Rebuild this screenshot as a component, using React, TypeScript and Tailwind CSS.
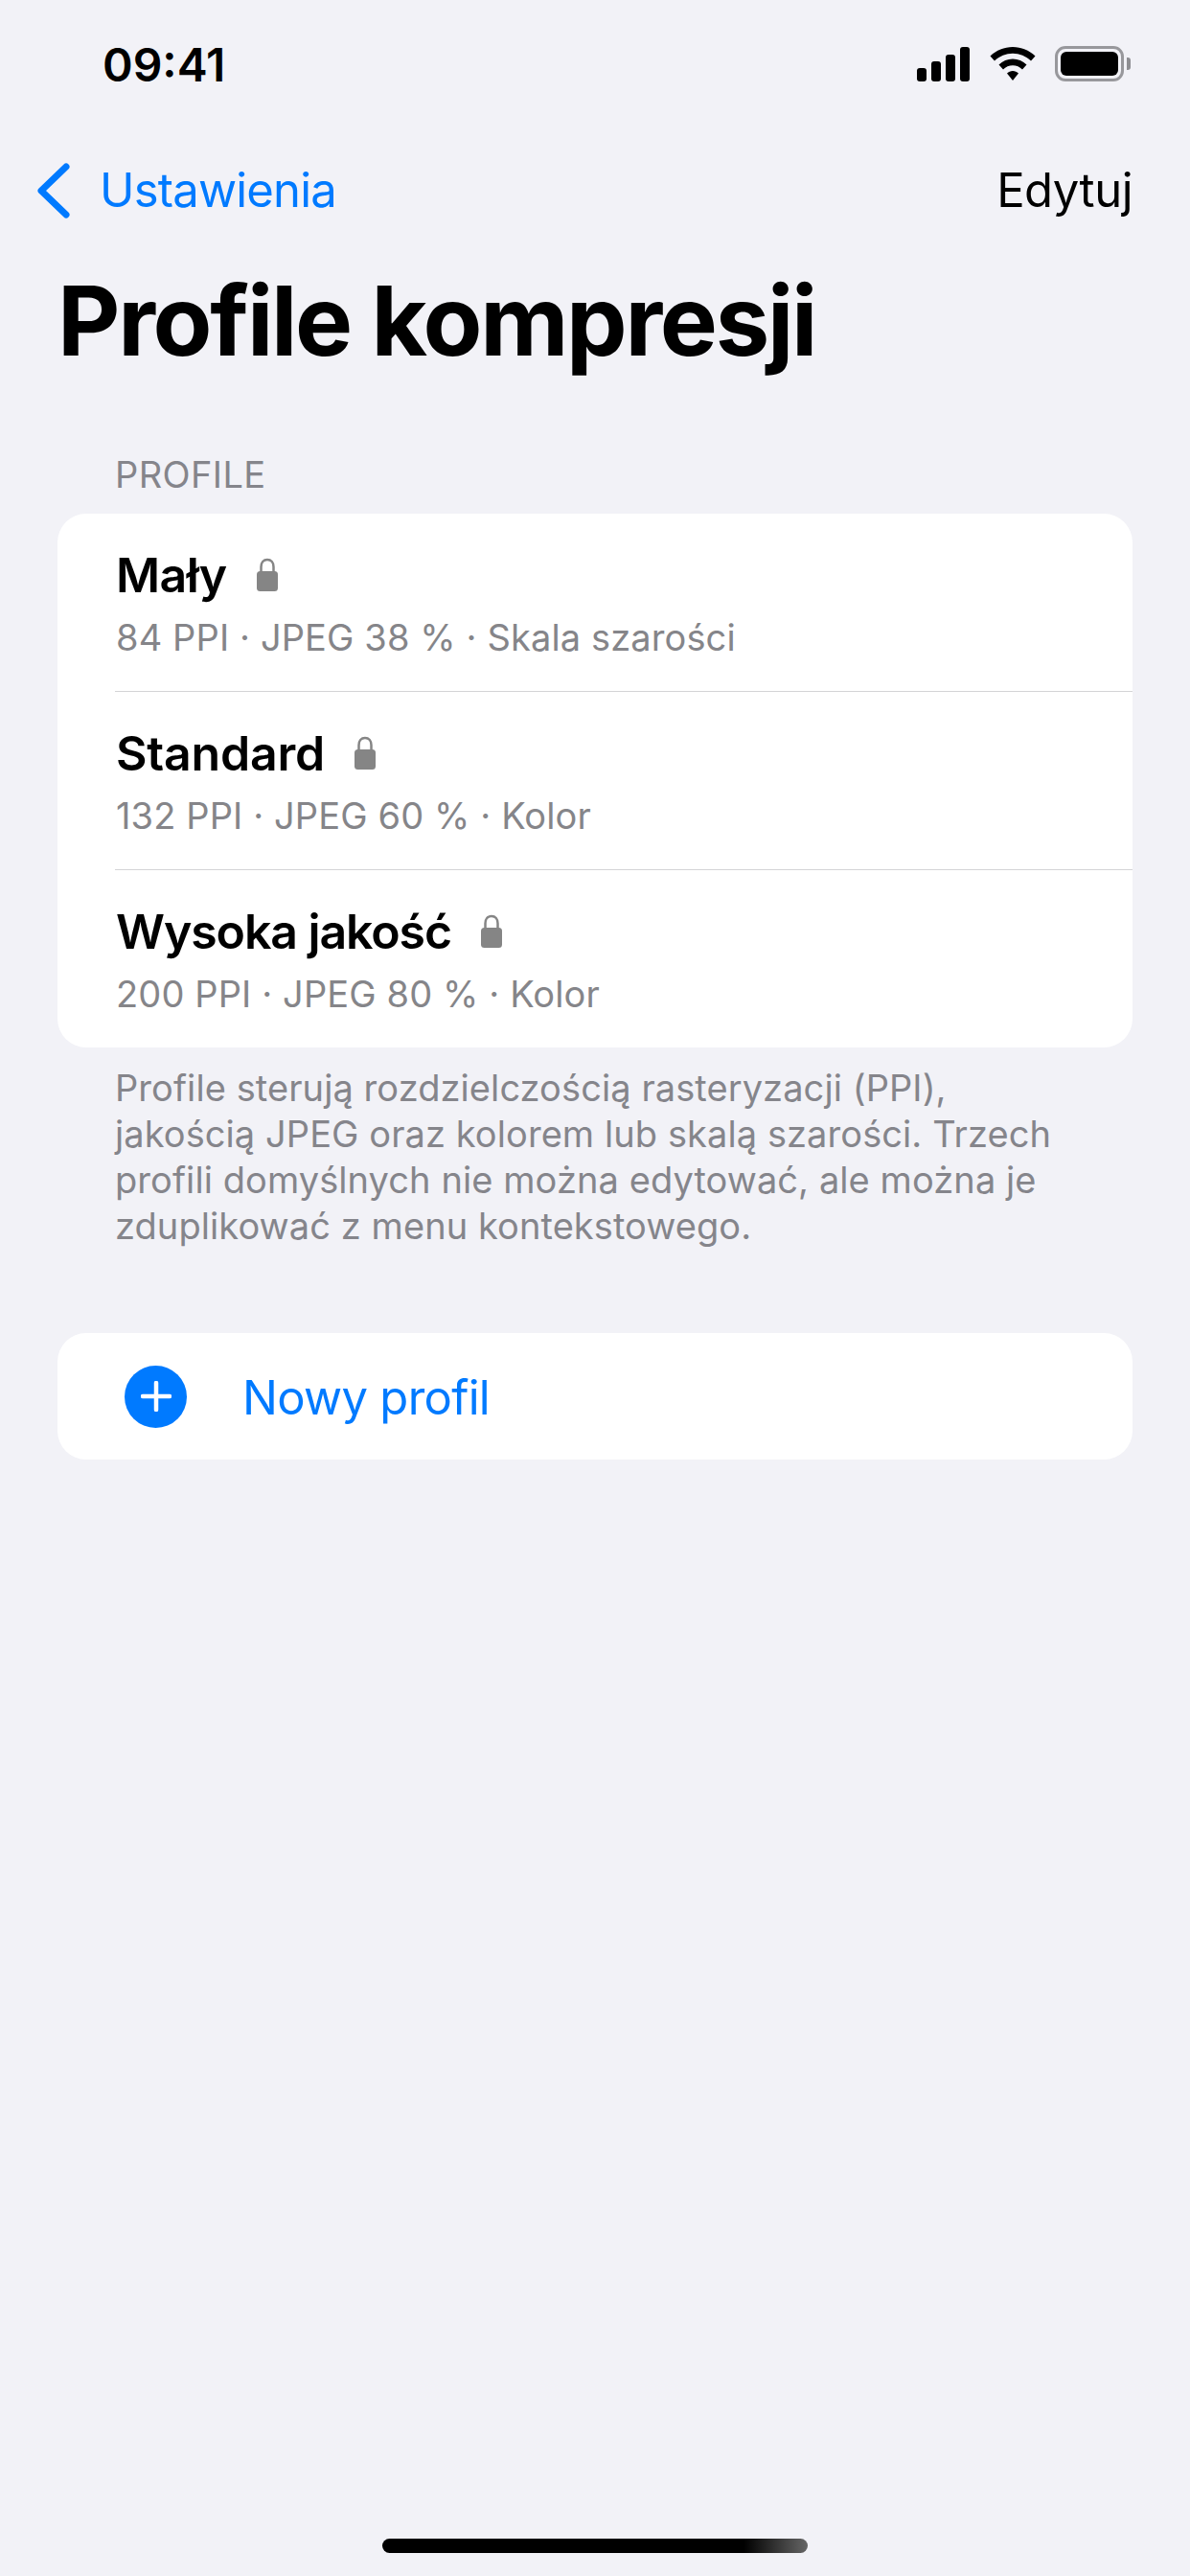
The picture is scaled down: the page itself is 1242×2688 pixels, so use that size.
import React from 'react';

const profiles = [
  { name: 'Mały', detail: '84 PPI · JPEG 38 % · Skala szarości', tracking: 'tracking-[-0.5px]' },
  { name: 'Standard', detail: '132 PPI · JPEG 60 % · Kolor', tracking: 'tracking-[-0.2px]' },
  { name: 'Wysoka jakość', detail: '200 PPI · JPEG 80 % · Kolor', tracking: 'tracking-[-1.1px]' },
];

function StatusIcons() {
  return (
    <div className="flex items-center">
      <svg width="56" height="36" viewBox="0 0 56 36" fill="#000">
        <rect x="0" y="22" width="10" height="14" rx="3" />
        <rect x="15" y="15" width="10" height="21" rx="3" />
        <rect x="30" y="8" width="10" height="28" rx="3" />
        <rect x="45" y="0" width="10" height="36" rx="3" />
      </svg>
      <svg className="ml-[20px]" width="48" height="36" viewBox="0 0 48 36" fill="#000">
        <path d="M24 0C15 0 7 3.500 0.500 9.500L5 14.500C10 9.500 17 6.700 24 6.700S38 9.500 43 14.500L47.500 9.500C41 3.500 33 0 24 0Z" />
        <path d="M24 12.500C18.500 12.500 13.500 14.700 9.500 18.500L14 23.500C16.700 20.800 20.200 19.300 24 19.300S31.300 20.800 34 23.500L38.500 18.500C34.500 14.700 29.500 12.500 24 12.500Z" />
        <path d="M24 25C21.700 25 19.700 25.900 18 27.500L24 35L30 27.500C28.300 25.900 26.300 25 24 25Z" />
      </svg>
      <div className="ml-[20px] flex items-center">
        <div className="w-[72px] h-[37px] rounded-[11px] border-[3px] border-[#98989c] p-[3px]">
          <div className="w-full h-full rounded-[6px] bg-black" />
        </div>
        <div className="ml-[3px] w-[4px] h-[13px] rounded-r-[3px] bg-[#8e8e92]" />
      </div>
    </div>
  );
}

function Lock() {
  return (
    <svg width="24" height="36" viewBox="0 0 24 36" fill="none">
      <path d="M5.500 16V9.500C5.500 5 8 2 12 2S18.500 5 18.500 9.500V16" stroke="#858585" strokeWidth="2.500" />
      <rect x="1" y="14" width="22" height="21" rx="3.500" fill="#858585" />
    </svg>
  );
}

export default function App() {
  return (
    <div className="w-[1242px] h-[2688px] bg-[#f2f2f7] flex flex-col font-['Inter',sans-serif] text-black overflow-hidden">
      <div className="h-[135px] pt-[44px] pl-[107px] pr-[62px] flex justify-between items-start">
        <span className="text-[48px] leading-[48px] font-semibold">09:41</span>
        <div className="pt-[4px]">
          <StatusIcons />
        </div>
      </div>

      <div className="h-[124px] pt-[3px] pl-[38px] pr-[60px] flex items-center justify-between">
        <div className="flex items-center">
          <svg width="36" height="58" viewBox="0 0 36 58" fill="none">
            <path d="M31 4L5 29L31 54" stroke="#007aff" strokeWidth="7" strokeLinecap="round" strokeLinejoin="round" />
          </svg>
          <span className="ml-[30px] text-[49px] leading-[60px] text-[#007aff] tracking-[-0.8px]">Ustawienia</span>
        </div>
        <span className="text-[49px] leading-[60px] tracking-[-0.5px]">Edytuj</span>
      </div>

      <div className="h-[170px] pt-[13px] pl-[60px] flex items-start">
        <h1 className="text-[101px] leading-[124px] font-bold tracking-[-2.300px]">Profile kompresji</h1>
      </div>

      <div className="pl-[120px] h-[107px] pt-[43px] text-[38px] leading-[46px] text-[#85858b] tracking-[0.4px]">PROFILE</div>

      <div className="mx-[60px] bg-white rounded-[30px]">
        {profiles.map((p, i) => (
          <div key={p.name} className="pl-[60px]">
            <div className={i < 2 ? 'h-[186px] pt-[34px] border-b border-[#d4d4d6]' : 'h-[185px] pt-[34px]'}>
              <div className="flex items-center h-[60px] pl-[1px]">
                <span className={`text-[50px] leading-[60px] font-semibold ${p.tracking}`}>{p.name}</span>
                <span className="ml-[30px]">
                  <Lock />
                </span>
              </div>
              <div className="mt-[10px] pl-[1px] text-[38px] leading-[50px] text-[#858589] tracking-[0.12px]">{p.detail}</div>
            </div>
          </div>
        ))}
      </div>

      <p className="pl-[120px] pr-[100px] pt-[18px] text-[38px] leading-[48px] text-[#85858b] tracking-[0.08px]">
        Profile sterują rozdzielczością rasteryzacji (PPI),
        <br />
        jakością JPEG oraz kolorem lub skalą szarości. Trzech
        <br />
        profili domyślnych nie można edytować, ale można je
        <br />
        zduplikować z menu kontekstowego.
      </p>

      <div className="mt-[88px] mx-[60px] h-[132px] bg-white rounded-[30px] flex items-center pl-[70px]">
        <div className="w-[65px] h-[65px] rounded-full bg-[#007aff] flex items-center justify-center">
          <svg width="32" height="32" viewBox="0 0 32 32" fill="none">
            <path d="M16 2V30M2 16H30" stroke="#fff" strokeWidth="4.500" strokeLinecap="round" />
          </svg>
        </div>
        <span className="ml-[58px] mt-[3px] text-[49px] leading-[60px] text-[#007aff] tracking-[-0.7px]">Nowy profil</span>
      </div>

      <div className="mt-auto mb-[24px] mx-auto w-[444px] h-[15px] rounded-full bg-[linear-gradient(to_right,#000_85%,#666_100%)]" />
    </div>
  );
}
